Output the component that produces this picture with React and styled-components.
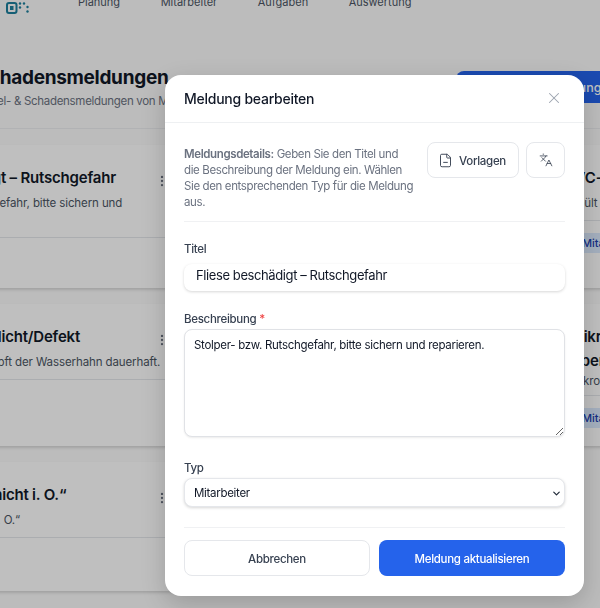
import React from 'react'
import styled, { createGlobalStyle } from 'styled-components'
import { ChevronDown, EllipsisVertical, FileMinus, Languages, X } from 'lucide-react'

const GlobalStyle = createGlobalStyle`
  html, body {
    margin: 0;
    height: 100%;
    overflow: hidden;
    background: #fff;
    font-family: Inter, "Liberation Sans", sans-serif;
    -webkit-font-smoothing: antialiased;
  }
  * { box-sizing: border-box; }
`

const Page = styled.div`
  width: 600px;
  height: 608px;
  overflow: hidden;
  position: relative;
  background: #fbfbfb;
`

/* the page behind the dialog is scrolled down and sideways */
const Scrolled = styled.div`
  width: 1100px;
  margin: -38px 0 0 -142px;
`

const Nav = styled.nav`
  height: 62px;
  display: flex;
  align-items: flex-start;
  padding: 30px 0 0 148px;
`

const Logo = styled.svg`
  width: 24px;
  height: 24px;
  flex: none;
`

const NavLinks = styled.div`
  display: flex;
  gap: 40.5px;
  margin-left: 48px;
  font-size: 11px;
  line-height: 20px;
  color: #4b5563;
`

const PageHead = styled.header`
  height: 66px;
  margin-top: 40px;
  padding-left: 22px;
  display: flex;
  align-items: flex-start;
`

const TitleBlock = styled.div`
  width: 576px;
  flex: none;
`

const Heading = styled.h1`
  margin: 0;
  font-size: 19px;
  line-height: 28px;
  font-weight: 700;
  color: #111827;
  letter-spacing: -0.3px;
`

const SubHeading = styled.p`
  margin: 0 0 0 14px;
  font-size: 11.5px;
  line-height: 18px;
  color: #6b7280;
  letter-spacing: -0.3px;
`

const NewButton = styled.button`
  margin-top: 7px;
  width: 200px;
  height: 32px;
  border: 0;
  border-radius: 8px;
  background: #2563eb;
  color: #fff;
  font: 500 12.5px Inter, sans-serif;
  text-align: left;
  padding-left: 58px;
`

const Rule = styled.div`
  height: 1px;
  margin-top: -2px;
  background: #eceef0;
`

const Cards = styled.main`
  display: grid;
  grid-template-columns: repeat(3, 328px);
  grid-template-rows: 143px 142px 129px;
  gap: 16px;
  padding-top: 16px;
`

const Card = styled.article`
  background: #fff;
  border-radius: 2px;
  box-shadow: 0 2px 3px rgba(0, 0, 0, 0.14);
  display: flex;
  flex-direction: column;
`

const CardBody = styled.div`
  padding: 21px 17px ${(p) => (p.$tight ? 5 : 8)}px 24px;
`

const CardHead = styled.div`
  display: flex;
  align-items: flex-start;
  justify-content: space-between;
  min-height: 29px;
`

const CardTitle = styled.h3`
  margin: 0;
  font-size: 15px;
  line-height: 24px;
  font-weight: 600;
  color: #111827;
  letter-spacing: -0.2px;
  width: 250px;
`

const Kebab = styled.span`
  display: flex;
  margin-top: 8px;
  color: #6b7280;
`

const CardText = styled.p`
  margin: 0;
  font-size: 11.5px;
  line-height: 17px;
  letter-spacing: -0.1px;
  color: #4b5563;
`

const CardFoot = styled.div`
  flex: 1;
  border-top: 1px solid #e5e7eb;
  padding: 12px 24px;
`

const Badge = styled.span`
  display: block;
  width: fit-content;
  height: 20px;
  padding: 0 12px;
  border-radius: 4px;
  background: #dbeafe;
  color: #1e40af;
  font-size: 11px;
  line-height: 20px;
  font-weight: 500;
`

const Backdrop = styled.div`
  position: absolute;
  inset: 0;
  background: rgba(0, 0, 0, 0.25);
  backdrop-filter: blur(0.6px);
`

const Dialog = styled.form`
  position: absolute;
  left: 165px;
  top: 75px;
  width: 419px;
  height: 521px;
  background: #fff;
  border-radius: 16px;
  box-shadow: 0 8px 24px rgba(0, 0, 0, 0.18);
  display: flex;
  flex-direction: column;
`

const DialogHead = styled.div`
  height: 48px;
  flex: none;
  border-bottom: 1px solid #eef0f2;
  padding: 0 19px;
  display: flex;
  align-items: center;
  justify-content: space-between;
`

const DialogTitle = styled.h2`
  margin: 0;
  font-size: 14px;
  line-height: 20px;
  font-weight: 500;
  letter-spacing: -0.25px;
  color: #111827;
`

const CloseIcon = styled.span`
  display: flex;
  margin-right: 2px;
  margin-top: -1px;
  color: #9ca3af;
`

const DialogBody = styled.div`
  flex: 1;
  padding: 19px 19px 0;
  display: flex;
  flex-direction: column;
`

const Intro = styled.div`
  display: flex;
  justify-content: space-between;
  align-items: flex-start;
  padding-bottom: 11px;
  border-bottom: 1px solid #f0f1f3;
`

const IntroText = styled.p`
  margin: 4px 0 0;
  width: 232px;
  font-size: 11.5px;
  line-height: 16px;
  letter-spacing: -0.38px;
  color: #6b7280;
  white-space: nowrap;
  b { font-weight: 600; }
`

const IntroActions = styled.div`
  display: flex;
  gap: 7px;
  flex: none;
`

const GhostButton = styled.button`
  height: 36px;
  padding: ${(p) => (p.$iconOnly ? '0 11.5px' : '1px 12px 0 10px')};
  display: flex;
  align-items: center;
  gap: 6px;
  background: #fff;
  border: 1px solid #e5e7eb;
  border-radius: 8px;
  color: #374151;
  font: 500 11.5px Inter, sans-serif;
  letter-spacing: -0.3px;
`

const Field = styled.div`
  margin-top: ${(p) => p.$top}px;
  display: flex;
  flex-direction: column;
  position: relative;
`

const Label = styled.label`
  font-size: 11.5px;
  line-height: 16px;
  font-weight: 500;
  letter-spacing: -0.3px;
  color: #374151;
  margin-bottom: ${(p) => p.$gap || 7}px;
  em {
    color: #ef4444;
    font-style: normal;
  }
`

const TextInput = styled.input`
  height: 27px;
  border: 0;
  border-radius: 8px;
  padding: 0 12px 5px;
  background: #fff;
  color: #111827;
  font: 400 13px Inter, sans-serif;
  letter-spacing: -0.4px;
  box-shadow: 0 1px 3px rgba(0, 0, 0, 0.16);
  outline: none;
`

const TextArea = styled.textarea`
  height: 108px;
  border: 1px solid #e0e2e6;
  border-radius: 8px;
  padding: 7px 9px;
  background: #fff;
  color: #111827;
  font: 400 11.5px/16px Inter, sans-serif;
  letter-spacing: -0.3px;
  box-shadow: 0 1px 2px rgba(0, 0, 0, 0.08);
  outline: none;
`

const Select = styled.select`
  appearance: none;
  height: 29px;
  border: 1px solid #e5e7eb;
  border-radius: 8px;
  padding: 0 9px;
  background: #fff;
  color: #111827;
  font: 400 11.5px Inter, sans-serif;
  letter-spacing: -0.3px;
  box-shadow: 0 1px 3px rgba(0, 0, 0, 0.16);
  outline: none;
`

const SelectArrow = styled.span`
  position: absolute;
  right: 3px;
  bottom: 8px;
  display: flex;
  color: #1f2937;
  pointer-events: none;
`

const DialogFoot = styled.div`
  margin-top: 20px;
  padding-top: 12px;
  border-top: 1px solid #f0f1f3;
  display: grid;
  grid-template-columns: 186px 186px;
  gap: 9px;
`

const CancelButton = styled.button`
  height: 36px;
  padding: 1px 0 0;
  background: #fff;
  border: 1px solid #e5e7eb;
  border-radius: 8px;
  color: #374151;
  font: 500 11.5px Inter, sans-serif;
  letter-spacing: -0.3px;
`

const SaveButton = styled.button`
  height: 36px;
  padding: 1px 0 0;
  background: #2563eb;
  border: 0;
  border-radius: 8px;
  color: #fff;
  font: 500 11.5px Inter, sans-serif;
  letter-spacing: -0.3px;
`

const cards = [
  { title: 'Fliese beschädigt – Rutschgefahr', text: 'Stolper- bzw. Rutschgefahr, bitte sichern und reparieren.' },
  { title: 'Fenster schließt nicht richtig', text: 'Der Griff im Flur ist locker und klemmt.' },
  { title: 'WC-Spülung defekt', text: 'Spült nicht mehr.' },
  { title: 'Wasserhahn undicht/Defekt', text: 'Im Waschraum EG tropft der Wasserhahn dauerhaft.' },
  { title: 'Heizung im Büro fällt aus', text: 'Der Heizkörper bleibt seit gestern kalt.' },
  { title: 'Mikrowelle in der Teeküche Überhitzung', text: 'Mikrowelle wird zu heiß.', tight: true },
  { title: 'Aufzug Status „nicht i. O.“', text: 'Aufzug Status „nicht i. O.“' },
]

function App() {
  return (
    <Page>
      <GlobalStyle />
      <Scrolled>
        <Nav>
          <Logo viewBox="0 0 24 24" fill="none">
            <rect x="1" y="11" width="9.5" height="10" rx="2" stroke="#1c7f9c" strokeWidth="2" />
            <rect x="4" y="14" width="3.5" height="4" fill="#1c7f9c" />
            <g fill="#1c7f9c">
              <circle cx="14" cy="11.5" r="1.2" />
              <circle cx="18" cy="11.5" r="1.2" />
              <circle cx="21.5" cy="15" r="1.2" />
              <circle cx="14" cy="15.5" r="1.2" />
              <circle cx="21.5" cy="19.5" r="1.2" />
            </g>
          </Logo>
          <NavLinks>
            <span>Planung</span>
            <span>Mitarbeiter</span>
            <span>Aufgaben</span>
            <span>Auswertung</span>
          </NavLinks>
        </Nav>
        <PageHead>
          <TitleBlock>
            <Heading>Mängel- &amp; Schadensmeldungen</Heading>
            <SubHeading>Verwalten Sie Mängel- &amp; Schadensmeldungen von Mitarbeitern</SubHeading>
          </TitleBlock>
          <NewButton type="button">Neue Meldung</NewButton>
        </PageHead>
        <Rule />
        <Cards>
          {cards.map((card) => (
            <Card key={card.title}>
              <CardBody $tight={card.tight}>
                <CardHead>
                  <CardTitle>{card.title}</CardTitle>
                  <Kebab>
                    <EllipsisVertical size={14} />
                  </Kebab>
                </CardHead>
                <CardText>{card.text}</CardText>
              </CardBody>
              <CardFoot>
                <Badge>Mitarbeiter</Badge>
              </CardFoot>
            </Card>
          ))}
        </Cards>
      </Scrolled>
      <Backdrop />
      <Dialog>
        <DialogHead>
          <DialogTitle>Meldung bearbeiten</DialogTitle>
          <CloseIcon>
            <X size={18} strokeWidth={1.4} />
          </CloseIcon>
        </DialogHead>
        <DialogBody>
          <Intro>
            <IntroText>
              <b>Meldungsdetails:</b> Geben Sie den Titel und
              <br />
              die Beschreibung der Meldung ein. Wählen
              <br />
              Sie den entsprechenden Typ für die Meldung
              <br />
              aus.
            </IntroText>
            <IntroActions>
              <GhostButton type="button">
                <FileMinus size={15} strokeWidth={1.5} />
                Vorlagen
              </GhostButton>
              <GhostButton type="button" $iconOnly>
                <Languages size={14} strokeWidth={1.4} />
              </GhostButton>
            </IntroActions>
          </Intro>
          <Field $top={19}>
            <Label>Titel</Label>
            <TextInput defaultValue="Fliese beschädigt – Rutschgefahr" />
          </Field>
          <Field $top={20}>
            <Label $gap={2}>
              Beschreibung <em>*</em>
            </Label>
            <TextArea defaultValue="Stolper- bzw. Rutschgefahr, bitte sichern und reparieren." />
          </Field>
          <Field $top={23}>
            <Label $gap={2}>Typ</Label>
            <Select defaultValue="Mitarbeiter">
              <option>Mitarbeiter</option>
              <option>Kunde</option>
            </Select>
            <SelectArrow>
              <ChevronDown size={11} strokeWidth={2.6} />
            </SelectArrow>
          </Field>
          <DialogFoot>
            <CancelButton type="button">Abbrechen</CancelButton>
            <SaveButton type="button">Meldung aktualisieren</SaveButton>
          </DialogFoot>
        </DialogBody>
      </Dialog>
    </Page>
  )
}

export default App
